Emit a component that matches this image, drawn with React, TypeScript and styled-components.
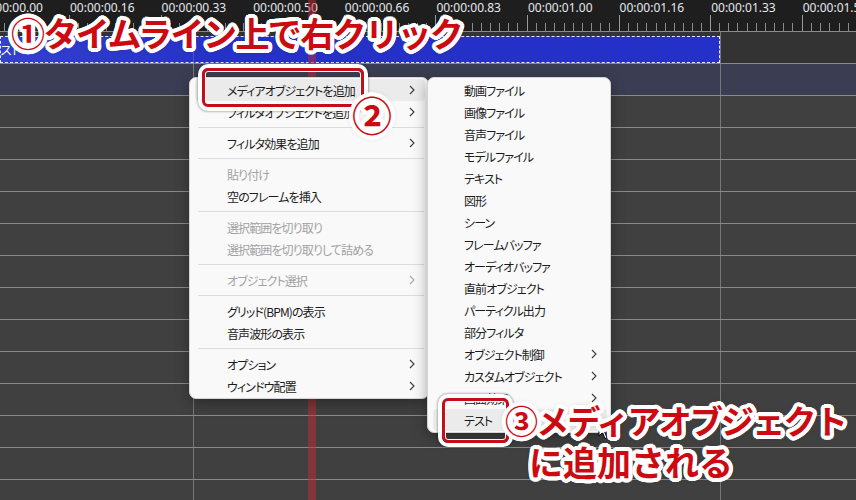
import React from 'react';
import styled, { createGlobalStyle } from 'styled-components';

const TICK = 91.6;

const rulerLabels = [
  '00:00:00.00',
  '00:00:00.16',
  '00:00:00.33',
  '00:00:00.50',
  '00:00:00.66',
  '00:00:00.83',
  '00:00:01.00',
  '00:00:01.16',
  '00:00:01.33',
  '00:00:01.50',
];

type Entry =
  | { kind: 'sep' }
  | { kind: 'item'; label: string; sub?: boolean; disabled?: boolean; active?: boolean };

const mainItems: Entry[] = [
  { kind: 'item', label: 'メディアオブジェクトを追加', sub: true, active: true },
  { kind: 'item', label: 'フィルタオブジェクトを追加', sub: true },
  { kind: 'sep' },
  { kind: 'item', label: 'フィルタ効果を追加', sub: true },
  { kind: 'sep' },
  { kind: 'item', label: '貼り付け', disabled: true },
  { kind: 'item', label: '空のフレームを挿入' },
  { kind: 'sep' },
  { kind: 'item', label: '選択範囲を切り取り', disabled: true },
  { kind: 'item', label: '選択範囲を切り取りして詰める', disabled: true },
  { kind: 'sep' },
  { kind: 'item', label: 'オブジェクト選択', sub: true, disabled: true },
  { kind: 'sep' },
  { kind: 'item', label: 'グリッド(BPM)の表示' },
  { kind: 'item', label: '音声波形の表示' },
  { kind: 'sep' },
  { kind: 'item', label: 'オプション', sub: true },
  { kind: 'item', label: 'ウィンドウ配置', sub: true },
];

const mediaItems: Entry[] = [
  { kind: 'item', label: '動画ファイル' },
  { kind: 'item', label: '画像ファイル' },
  { kind: 'item', label: '音声ファイル' },
  { kind: 'item', label: 'モデルファイル' },
  { kind: 'item', label: 'テキスト' },
  { kind: 'item', label: '図形' },
  { kind: 'item', label: 'シーン' },
  { kind: 'item', label: 'フレームバッファ' },
  { kind: 'item', label: 'オーディオバッファ' },
  { kind: 'item', label: '直前オブジェクト' },
  { kind: 'item', label: 'パーティクル出力' },
  { kind: 'item', label: '部分フィルタ' },
  { kind: 'item', label: 'オブジェクト制御', sub: true },
  { kind: 'item', label: 'カスタムオブジェクト', sub: true },
  { kind: 'item', label: '画面効果', sub: true },
  { kind: 'item', label: 'テスト', active: true },
];

// white outline built from a ring of hard shadows
const ring = (r: number, color: string) => {
  const out: string[] = [];
  for (let i = 0; i < 24; i++) {
    const a = (i / 24) * Math.PI * 2;
    out.push(`${(Math.cos(a) * r).toFixed(2)}px ${(Math.sin(a) * r).toFixed(2)}px 0 ${color}`);
  }
  return out.join(', ');
};

const Chevron: React.FC<{ disabled?: boolean }> = ({ disabled }) => (
  <ArrowIcon width="6" height="10" viewBox="0 0 6 10" $disabled={disabled}>
    <polyline points="1,1 5,5 1,9" fill="none" strokeWidth="1.1" />
  </ArrowIcon>
);

const MenuList: React.FC<{ entries: Entry[]; $left: number; $width: number; $textX: number }> = ({
  entries,
  $left,
  $width,
  $textX,
}) => (
  <Menu $left={$left} $width={$width}>
    {entries.map((e, i) =>
      e.kind === 'sep' ? (
        <Separator key={i} />
      ) : (
        <MenuItem key={i} $active={e.active} $disabled={e.disabled} $textX={$textX}>
          <span>{e.label}</span>
          {e.sub && <Chevron disabled={e.disabled} />}
        </MenuItem>
      ),
    )}
  </Menu>
);

const App: React.FC = () => {
  return (
    <Screen>
      <GlobalStyle />
      <Timeline>
        <Ruler>
          <RulerTrack>
            {rulerLabels.map((t) => (
              <RulerCell key={t}>
                <RulerLabel>{t}</RulerLabel>
              </RulerCell>
            ))}
          </RulerTrack>
        </Ruler>
        <Track $tone="clip">
          <Clip>
            <ClipLabel>テスト</ClipLabel>
          </Clip>
        </Track>
        <Track $tone="active" />
        {Array.from({ length: 13 }).map((_, i) => (
          <Track key={i} $tone="plain" />
        ))}
      </Timeline>

      <Playhead />

      <MenuList entries={mainItems} $left={189} $width={240} $textX={32} />
      <MenuList entries={mediaItems} $left={427} $width={184} $textX={31} />

      <Pointer width="12" height="19" viewBox="0 0 12 19">
        <path d="M1 1 L1 15 L4.5 11.5 L7 17.5 L9 16.6 L6.6 10.8 L11 10.8 Z" fill="#fff" stroke="#000" strokeWidth="1" />
      </Pointer>

      <Frame $x={202} $y={68} $w={162} $h={39} />
      <Frame $x={442} $y={398} $w={67} $h={45} />

      <Callout $x={11} $y={16}>
        <CalloutLine $size={34} $spacing={-1.6}>①タイムライン上で右クリック</CalloutLine>
      </Callout>
      <Callout $x={352} $y={94}>
        <CalloutLine $size={40} $spacing={0}>②</CalloutLine>
      </Callout>
      <Callout $x={505} $y={404}>
        <CalloutLine $size={33} $spacing={-1.8}>③メディアオブジェクト</CalloutLine>
        <CalloutLine $size={34} $spacing={0} $indent={24}>に追加される</CalloutLine>
      </Callout>
    </Screen>
  );
};

export default App;

const GlobalStyle = createGlobalStyle`
  html, body {
    margin: 0;
    padding: 0;
    background: #3f3f3f;
    overflow: hidden;
  }
`;

const Screen = styled.div`
  position: relative;
  width: 856px;
  height: 500px;
  overflow: hidden;
  background: #3f3f3f;
  font-family: "Noto Sans", "Noto Sans CJK JP", sans-serif;
`;

const Timeline = styled.div`
  display: flex;
  flex-direction: column;
`;

const Ruler = styled.div`
  display: flex;
  height: 32px;
  box-sizing: border-box;
  border-bottom: 1px solid #8a8a8a;
  background: #1e1e1e;
  overflow: hidden;
`;

const RulerTrack = styled.div`
  display: flex;
  margin-left: -22.6px;
`;

const RulerCell = styled.div`
  position: relative;
  flex: 0 0 ${TICK}px;
  height: 31px;
  background: repeating-linear-gradient(
      to right,
      #8c8c8c 0 1px,
      transparent 1px ${TICK / 10}px
    )
    left bottom / 100% 8px no-repeat;

  &::before {
    content: '';
    position: absolute;
    left: 0;
    top: 15px;
    bottom: 0;
    width: 1px;
    background: #9a9a9a;
  }
`;

const RulerLabel = styled.span`
  display: block;
  padding: 1px 0 0 1px;
  font-size: 12px;
  line-height: 14px;
  color: #e4e8ee;
  white-space: nowrap;
`;

const toneBg = {
  clip: '#333333',
  active: '#3b3e52',
  plain: '#404040',
};

// vertical grid lines at x = 193 and x = 720 run through every track
const gridLines =
  'linear-gradient(to right, transparent 193px, #777 193px 194px, transparent 194px 720px, #777 720px 721px, transparent 721px)';

const Track = styled.div<{ $tone: keyof typeof toneBg }>`
  display: flex;
  align-items: flex-start;
  flex: 0 0 auto;
  height: 32px;
  box-sizing: border-box;
  padding-top: ${(p) => (p.$tone === 'clip' ? 4 : 0)}px;
  border-bottom: 1px solid #8a8a8a;
  background: ${gridLines}, ${(p) => toneBg[p.$tone]};
`;

const Clip = styled.div`
  display: flex;
  align-items: center;
  width: 720px;
  height: 27px;
  box-sizing: border-box;
  border: 1px dashed rgba(255, 255, 255, 0.9);
  background: linear-gradient(to right, transparent 192px, rgba(150, 150, 200, 0.35) 192px 193px, transparent 193px),
    linear-gradient(to right, #3440cf, #2631c8 30%, #2530c8);
  overflow: hidden;
`;

const ClipLabel = styled.span`
  margin-left: -12px;
  font-family: "Noto Sans CJK JP", sans-serif;
  font-feature-settings: "palt";
  font-size: 12.5px;
  color: #ffffff;
`;

const Playhead = styled.div`
  position: absolute;
  top: 0;
  bottom: 0;
  left: 308px;
  width: 8px;
  background: rgba(196, 44, 54, 0.5);
`;

const Menu = styled.div<{ $left: number; $width: number }>`
  position: absolute;
  top: 77px;
  left: ${(p) => p.$left}px;
  width: ${(p) => p.$width}px;
  box-sizing: border-box;
  display: flex;
  flex-direction: column;
  padding: 1px 0 1px;
  background: #f9f9f9;
  border: 1px solid #d4d4d4;
  border-radius: 7px;
  box-shadow: 0 4px 14px rgba(0, 0, 0, 0.35);
  font-family: "Noto Sans CJK JP", sans-serif;
  font-feature-settings: "palt";
  font-size: 12px;
  letter-spacing: -0.9px;
`;

const MenuItem = styled.div<{ $active?: boolean; $disabled?: boolean; $textX: number }>`
  display: flex;
  align-items: center;
  height: 22px;
  margin: 0 3px 0 5px;
  padding: 0 10px 0 ${(p) => p.$textX}px;
  border-radius: 4px;
  background: ${(p) => (p.$active ? '#ebebeb' : 'transparent')};
  color: ${(p) => (p.$disabled ? '#a2a2a2' : '#1b1b1b')};
  white-space: nowrap;

  span {
    flex: 1;
  }
`;

const ArrowIcon = styled.svg<{ $disabled?: boolean }>`
  flex: 0 0 auto;
  stroke: ${(p) => (p.$disabled ? '#a8a8a8' : '#3a3a3a')};
`;

const Separator = styled.div`
  height: 1px;
  margin: 4px 4px 4px 8px;
  background: #dcdcdc;
`;

const Pointer = styled.svg`
  position: absolute;
  left: 598px;
  top: 421px;
`;

const Frame = styled.div<{ $x: number; $y: number; $w: number; $h: number }>`
  position: absolute;
  left: ${(p) => p.$x}px;
  top: ${(p) => p.$y}px;
  width: ${(p) => p.$w}px;
  height: ${(p) => p.$h}px;
  box-sizing: border-box;
  border: 3px solid #c40f18;
  border-radius: 6px;
  box-shadow: 0 0 0 4px #ffffff, inset 0 0 0 1px #ffffff, 0 0 2px 5px rgba(0, 0, 0, 0.25);
`;

const Callout = styled.div<{ $x: number; $y: number }>`
  position: absolute;
  left: ${(p) => p.$x}px;
  top: ${(p) => p.$y}px;
  display: flex;
  flex-direction: column;
  gap: 8px;
  font-family: "Noto Sans CJK JP", sans-serif;
  font-weight: 700;
  line-height: 1;
  color: #cc0a12;
  white-space: nowrap;
  text-shadow: ${ring(4, '#ffffff')}, ${ring(2.2, '#ffffff')}, 0 0 7px rgba(0, 0, 0, 0.45);
`;

const CalloutLine = styled.span<{ $size: number; $spacing: number; $indent?: number }>`
  font-size: ${(p) => p.$size}px;
  letter-spacing: ${(p) => p.$spacing}px;
  padding-left: ${(p) => p.$indent ?? 0}px;
`;
